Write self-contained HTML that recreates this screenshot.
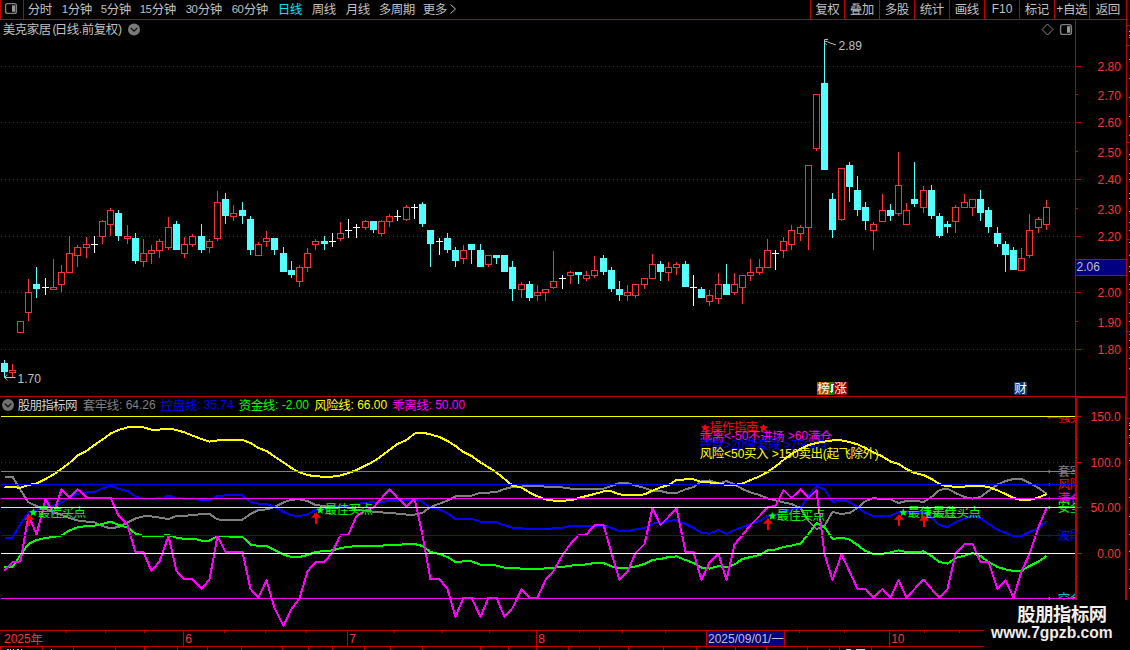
<!DOCTYPE html>
<html><head><meta charset="utf-8"><title>chart</title>
<style>html,body{margin:0;padding:0;background:#000;overflow:hidden}svg{display:block}text{font-family:"Liberation Sans","Noto Sans CJK SC",sans-serif;}</style>
</head><body>
<svg width="1130" height="650" viewBox="0 0 1130 650" shape-rendering="crispEdges">
<rect width="1130" height="650" fill="#000"/>
<g shape-rendering="geometricPrecision"><rect x="5.6" y="3.6" width="10.8" height="9.8" rx="2" fill="none" stroke="#808080" stroke-width="1.4"/><rect x="12" y="5.4" width="3.2" height="6.4" fill="#989898"/></g>
<rect x="0" y="0" width="1" height="19" fill="#c00000"/>
<rect x="23" y="0" width="1" height="19" fill="#c00000"/>
<rect x="0" y="19" width="1127" height="1" fill="#c00000"/>
<g shape-rendering="geometricPrecision" font-size="12.5" fill="#c0c0c0" letter-spacing="-0.5">
<text x="27.7" y="13.9">分时</text>
<text y="13.9"><tspan x="61.7" y="13.3" font-size="11.4">1</tspan><tspan x="67.7" y="13.9">分钟</tspan></text>
<text y="13.9"><tspan x="100.7" y="13.3" font-size="11.4">5</tspan><tspan x="106.7" y="13.9">分钟</tspan></text>
<text y="13.9"><tspan x="139.7" y="13.3" font-size="11.4">15</tspan><tspan x="151.7" y="13.9">分钟</tspan></text>
<text y="13.9"><tspan x="185.7" y="13.3" font-size="11.4">30</tspan><tspan x="197.7" y="13.9">分钟</tspan></text>
<text y="13.9"><tspan x="231.7" y="13.3" font-size="11.4">60</tspan><tspan x="243.7" y="13.9">分钟</tspan></text>
<text x="277.7" y="13.9" fill="#00e8ff">日线</text>
<text x="311.7" y="13.9">周线</text>
<text x="345.7" y="13.9">月线</text>
<text x="378.7" y="13.9">多周期</text>
<text x="422.7" y="13.9">更多</text>
</g>
<path d="M450.5 4.5 L455.5 9 L450.5 13.5" fill="none" stroke="#c0c0c0" stroke-width="1" shape-rendering="geometricPrecision"/>
<rect x="810" y="0" width="1" height="19" fill="#c00000"/>
<rect x="844" y="0" width="1" height="19" fill="#c00000"/>
<rect x="879" y="0" width="1" height="19" fill="#c00000"/>
<rect x="914" y="0" width="1" height="19" fill="#c00000"/>
<rect x="949" y="0" width="1" height="19" fill="#c00000"/>
<rect x="984" y="0" width="1" height="19" fill="#c00000"/>
<rect x="1019" y="0" width="1" height="19" fill="#c00000"/>
<rect x="1054" y="0" width="1" height="19" fill="#c00000"/>
<rect x="1089" y="0" width="1" height="19" fill="#c00000"/>
<rect x="1126" y="0" width="1" height="19" fill="#c00000"/>
<g shape-rendering="geometricPrecision" font-size="12.5" fill="#c0c0c0" letter-spacing="-0.5">
<text x="815.2" y="13.9">复权</text>
<text x="849.7" y="13.9">叠加</text>
<text x="884.7" y="13.9">多股</text>
<text x="919.7" y="13.9">统计</text>
<text x="954.7" y="13.9">画线</text>
<text x="991.7" y="13.1" font-size="12" letter-spacing="0">F10</text>
<text x="1024.7" y="13.9">标记</text>
<text x="1056.2" y="13.3" font-size="12" letter-spacing="0">+</text>
<text x="1063" y="13.9">自选</text>
<text x="1095.7" y="13.9">返回</text>
</g>
<g shape-rendering="geometricPrecision" font-size="12.5" fill="#c0c0c0" letter-spacing="-0.5">
<text x="2.7" y="33.9">美克家居</text>
<text y="33.9"><tspan x="52.6" y="33.3" font-size="12">(</tspan><tspan x="54.7" y="33.9">日线</tspan><tspan x="78.7" y="33.3" font-size="12">.</tspan><tspan x="81.7" y="33.9">前复权</tspan><tspan x="118" y="33.3" font-size="12">)</tspan></text>
</g>
<g shape-rendering="geometricPrecision"><circle cx="134" cy="29.5" r="6" fill="#7a7a7a"/><path d="M130.8 28 L134 31.2 L137.2 28" fill="none" stroke="#101010" stroke-width="1.3"/></g>
<g shape-rendering="geometricPrecision"><path d="M1047.5 24 L1053 29.5 L1047.5 35 L1042 29.5 Z" fill="none" stroke="#8a8a8a" stroke-width="1"/><rect x="1060.6" y="24.6" width="10.8" height="9.8" rx="2" fill="none" stroke="#808080" stroke-width="1.4"/><rect x="1067" y="26.2" width="3.2" height="6.5" fill="#989898"/></g>
<rect x="1075" y="19" width="1" height="377" fill="#c00000"/>
<rect x="1126" y="0" width="1" height="396" fill="#c00000"/>
<rect x="0" y="396" width="1127" height="1" fill="#c00000"/>
<line x1="1" y1="66.5" x2="1075" y2="66.5" stroke="#b80000" stroke-width="1" stroke-dasharray="1 3"/>
<rect x="1076" y="66" width="5" height="1" fill="#c00000"/>
<text x="1097.6" y="70.9" font-size="12" fill="#ff3232" shape-rendering="geometricPrecision">2.80</text>
<rect x="1076" y="94" width="2" height="1" fill="#c00000"/>
<text x="1097.6" y="99.6" font-size="12" fill="#ff3232" shape-rendering="geometricPrecision">2.70</text>
<line x1="1" y1="122.5" x2="1075" y2="122.5" stroke="#b80000" stroke-width="1" stroke-dasharray="1 3"/>
<rect x="1076" y="122" width="5" height="1" fill="#c00000"/>
<text x="1097.6" y="126.9" font-size="12" fill="#ff3232" shape-rendering="geometricPrecision">2.60</text>
<rect x="1076" y="151" width="2" height="1" fill="#c00000"/>
<text x="1097.6" y="156.6" font-size="12" fill="#ff3232" shape-rendering="geometricPrecision">2.50</text>
<line x1="1" y1="179.5" x2="1075" y2="179.5" stroke="#b80000" stroke-width="1" stroke-dasharray="1 3"/>
<rect x="1076" y="179" width="5" height="1" fill="#c00000"/>
<text x="1097.6" y="183.9" font-size="12" fill="#ff3232" shape-rendering="geometricPrecision">2.40</text>
<rect x="1076" y="208" width="2" height="1" fill="#c00000"/>
<text x="1097.6" y="213.6" font-size="12" fill="#ff3232" shape-rendering="geometricPrecision">2.30</text>
<line x1="1" y1="236.5" x2="1075" y2="236.5" stroke="#b80000" stroke-width="1" stroke-dasharray="1 3"/>
<rect x="1076" y="236" width="5" height="1" fill="#c00000"/>
<text x="1097.6" y="240.9" font-size="12" fill="#ff3232" shape-rendering="geometricPrecision">2.20</text>
<line x1="1" y1="292.5" x2="1075" y2="292.5" stroke="#b80000" stroke-width="1" stroke-dasharray="1 3"/>
<rect x="1076" y="292" width="5" height="1" fill="#c00000"/>
<text x="1097.6" y="296.9" font-size="12" fill="#ff3232" shape-rendering="geometricPrecision">2.00</text>
<rect x="1076" y="321" width="2" height="1" fill="#c00000"/>
<text x="1097.6" y="326.6" font-size="12" fill="#ff3232" shape-rendering="geometricPrecision">1.90</text>
<line x1="1" y1="349.5" x2="1075" y2="349.5" stroke="#b80000" stroke-width="1" stroke-dasharray="1 3"/>
<rect x="1076" y="349" width="5" height="1" fill="#c00000"/>
<text x="1097.6" y="353.9" font-size="12" fill="#ff3232" shape-rendering="geometricPrecision">1.80</text>
<rect x="1076" y="264" width="2" height="1" fill="#c00000"/>
<rect x="1076" y="259" width="50" height="17" fill="#000080"/>
<rect x="1076" y="259" width="50" height="1" fill="#c00000"/>
<rect x="1076" y="275" width="50" height="1" fill="#c00000"/>
<text x="1076.6" y="271.2" font-size="12" fill="#c0c0c0" shape-rendering="geometricPrecision">2.06</text>
<g shape-rendering="crispEdges">
<rect x="4" y="360" width="1" height="17" fill="#54ffff"/>
<rect x="1" y="363" width="7" height="9" fill="#54ffff"/>
<rect x="12" y="364" width="1" height="6" fill="#ff3232"/>
<rect x="12" y="373" width="1" height="4" fill="#ff3232"/>
<rect x="9.5" y="370.5" width="6" height="2" fill="none" stroke="#ff3232" stroke-width="1"/>
<rect x="17.5" y="321.5" width="6" height="11" fill="none" stroke="#ff3232" stroke-width="1"/>
<rect x="28" y="279" width="1" height="13" fill="#ff3232"/>
<rect x="28" y="313" width="1" height="8" fill="#ff3232"/>
<rect x="25.5" y="292.5" width="6" height="20" fill="none" stroke="#ff3232" stroke-width="1"/>
<rect x="36" y="267" width="1" height="31" fill="#54ffff"/>
<rect x="33" y="284" width="7" height="5" fill="#54ffff"/>
<rect x="45" y="278" width="1" height="17" fill="#ffffff"/>
<rect x="42" y="287" width="7" height="1" fill="#ffffff"/>
<rect x="53" y="259" width="1" height="28" fill="#ff3232"/>
<rect x="50.5" y="287.5" width="6" height="2" fill="none" stroke="#ff3232" stroke-width="1"/>
<rect x="61" y="265" width="1" height="7" fill="#ff3232"/>
<rect x="61" y="285" width="1" height="7" fill="#ff3232"/>
<rect x="58.5" y="272.5" width="6" height="12" fill="none" stroke="#ff3232" stroke-width="1"/>
<rect x="69" y="236" width="1" height="17" fill="#ff3232"/>
<rect x="66.5" y="253.5" width="6" height="19" fill="none" stroke="#ff3232" stroke-width="1"/>
<rect x="77" y="245" width="1" height="2" fill="#ff3232"/>
<rect x="77" y="256" width="1" height="11" fill="#ff3232"/>
<rect x="74.5" y="247.5" width="6" height="8" fill="none" stroke="#ff3232" stroke-width="1"/>
<rect x="86" y="237" width="1" height="7" fill="#ff3232"/>
<rect x="86" y="248" width="1" height="10" fill="#ff3232"/>
<rect x="83.5" y="244.5" width="6" height="3" fill="none" stroke="#ff3232" stroke-width="1"/>
<rect x="94" y="236" width="1" height="17" fill="#ffffff"/>
<rect x="91" y="244" width="7" height="1" fill="#ffffff"/>
<rect x="102" y="220" width="1" height="1" fill="#ff3232"/>
<rect x="102" y="237" width="1" height="7" fill="#ff3232"/>
<rect x="99.5" y="221.5" width="6" height="15" fill="none" stroke="#ff3232" stroke-width="1"/>
<rect x="110" y="208" width="1" height="2" fill="#ff3232"/>
<rect x="110" y="225" width="1" height="11" fill="#ff3232"/>
<rect x="107.5" y="210.5" width="6" height="14" fill="none" stroke="#ff3232" stroke-width="1"/>
<rect x="118" y="210" width="1" height="31" fill="#54ffff"/>
<rect x="115" y="213" width="7" height="23" fill="#54ffff"/>
<rect x="127" y="225" width="1" height="11" fill="#ff3232"/>
<rect x="127" y="239" width="1" height="5" fill="#ff3232"/>
<rect x="124.5" y="236.5" width="6" height="2" fill="none" stroke="#ff3232" stroke-width="1"/>
<rect x="135" y="233" width="1" height="31" fill="#54ffff"/>
<rect x="132" y="238" width="7" height="23" fill="#54ffff"/>
<rect x="143" y="239" width="1" height="14" fill="#ff3232"/>
<rect x="143" y="262" width="1" height="5" fill="#ff3232"/>
<rect x="140.5" y="253.5" width="6" height="8" fill="none" stroke="#ff3232" stroke-width="1"/>
<rect x="151" y="245" width="1" height="5" fill="#ff3232"/>
<rect x="151" y="254" width="1" height="10" fill="#ff3232"/>
<rect x="148.5" y="250.5" width="6" height="3" fill="none" stroke="#ff3232" stroke-width="1"/>
<rect x="159" y="239" width="1" height="2" fill="#ff3232"/>
<rect x="159" y="251" width="1" height="7" fill="#ff3232"/>
<rect x="156.5" y="241.5" width="6" height="9" fill="none" stroke="#ff3232" stroke-width="1"/>
<rect x="168" y="217" width="1" height="10" fill="#ff3232"/>
<rect x="168" y="248" width="1" height="2" fill="#ff3232"/>
<rect x="165.5" y="227.5" width="6" height="20" fill="none" stroke="#ff3232" stroke-width="1"/>
<rect x="176" y="221" width="1" height="29" fill="#54ffff"/>
<rect x="173" y="224" width="7" height="26" fill="#54ffff"/>
<rect x="184" y="237" width="1" height="7" fill="#ff3232"/>
<rect x="184" y="254" width="1" height="4" fill="#ff3232"/>
<rect x="181.5" y="244.5" width="6" height="9" fill="none" stroke="#ff3232" stroke-width="1"/>
<rect x="192" y="234" width="1" height="2" fill="#ff3232"/>
<rect x="192" y="245" width="1" height="2" fill="#ff3232"/>
<rect x="189.5" y="236.5" width="6" height="8" fill="none" stroke="#ff3232" stroke-width="1"/>
<rect x="201" y="224" width="1" height="29" fill="#54ffff"/>
<rect x="198" y="236" width="7" height="14" fill="#54ffff"/>
<rect x="209" y="239" width="1" height="2" fill="#ff3232"/>
<rect x="209" y="248" width="1" height="5" fill="#ff3232"/>
<rect x="206.5" y="241.5" width="6" height="6" fill="none" stroke="#ff3232" stroke-width="1"/>
<rect x="217" y="191" width="1" height="11" fill="#ff3232"/>
<rect x="217" y="239" width="1" height="2" fill="#ff3232"/>
<rect x="214.5" y="202.5" width="6" height="36" fill="none" stroke="#ff3232" stroke-width="1"/>
<rect x="225" y="193" width="1" height="31" fill="#54ffff"/>
<rect x="222" y="199" width="7" height="17" fill="#54ffff"/>
<rect x="233" y="205" width="1" height="8" fill="#ff3232"/>
<rect x="233" y="217" width="1" height="4" fill="#ff3232"/>
<rect x="230.5" y="213.5" width="6" height="3" fill="none" stroke="#ff3232" stroke-width="1"/>
<rect x="242" y="202" width="1" height="22" fill="#54ffff"/>
<rect x="239" y="210" width="7" height="6" fill="#54ffff"/>
<rect x="250" y="216" width="1" height="39" fill="#54ffff"/>
<rect x="247" y="219" width="7" height="31" fill="#54ffff"/>
<rect x="258" y="242" width="1" height="2" fill="#ff3232"/>
<rect x="255.5" y="244.5" width="6" height="11" fill="none" stroke="#ff3232" stroke-width="1"/>
<rect x="266" y="231" width="1" height="7" fill="#ff3232"/>
<rect x="266" y="242" width="1" height="5" fill="#ff3232"/>
<rect x="263.5" y="238.5" width="6" height="3" fill="none" stroke="#ff3232" stroke-width="1"/>
<rect x="274" y="238" width="1" height="17" fill="#54ffff"/>
<rect x="271" y="238" width="7" height="12" fill="#54ffff"/>
<rect x="283" y="247" width="1" height="25" fill="#54ffff"/>
<rect x="280" y="253" width="7" height="19" fill="#54ffff"/>
<rect x="291" y="261" width="1" height="17" fill="#54ffff"/>
<rect x="288" y="270" width="7" height="5" fill="#54ffff"/>
<rect x="299" y="265" width="1" height="2" fill="#ff3232"/>
<rect x="299" y="282" width="1" height="5" fill="#ff3232"/>
<rect x="296.5" y="267.5" width="6" height="14" fill="none" stroke="#ff3232" stroke-width="1"/>
<rect x="307" y="248" width="1" height="5" fill="#ff3232"/>
<rect x="307" y="268" width="1" height="4" fill="#ff3232"/>
<rect x="304.5" y="253.5" width="6" height="14" fill="none" stroke="#ff3232" stroke-width="1"/>
<rect x="315" y="239" width="1" height="2" fill="#ff3232"/>
<rect x="315" y="245" width="1" height="5" fill="#ff3232"/>
<rect x="312.5" y="241.5" width="6" height="3" fill="none" stroke="#ff3232" stroke-width="1"/>
<rect x="324" y="236" width="1" height="14" fill="#54ffff"/>
<rect x="321" y="241" width="7" height="3" fill="#54ffff"/>
<rect x="332" y="233" width="1" height="14" fill="#ffffff"/>
<rect x="329" y="241" width="7" height="1" fill="#ffffff"/>
<rect x="340" y="222" width="1" height="11" fill="#ff3232"/>
<rect x="340" y="239" width="1" height="2" fill="#ff3232"/>
<rect x="337.5" y="233.5" width="6" height="5" fill="none" stroke="#ff3232" stroke-width="1"/>
<rect x="348" y="219" width="1" height="19" fill="#ffffff"/>
<rect x="345" y="230" width="7" height="1" fill="#ffffff"/>
<rect x="356" y="224" width="1" height="14" fill="#ffffff"/>
<rect x="353" y="227" width="7" height="1" fill="#ffffff"/>
<rect x="365" y="220" width="1" height="1" fill="#ff3232"/>
<rect x="365" y="228" width="1" height="2" fill="#ff3232"/>
<rect x="362.5" y="221.5" width="6" height="6" fill="none" stroke="#ff3232" stroke-width="1"/>
<rect x="373" y="221" width="1" height="12" fill="#54ffff"/>
<rect x="370" y="221" width="7" height="9" fill="#54ffff"/>
<rect x="381" y="220" width="1" height="1" fill="#ff3232"/>
<rect x="381" y="234" width="1" height="2" fill="#ff3232"/>
<rect x="378.5" y="221.5" width="6" height="12" fill="none" stroke="#ff3232" stroke-width="1"/>
<rect x="389" y="214" width="1" height="2" fill="#ff3232"/>
<rect x="389" y="222" width="1" height="5" fill="#ff3232"/>
<rect x="386.5" y="216.5" width="6" height="5" fill="none" stroke="#ff3232" stroke-width="1"/>
<rect x="397" y="210" width="1" height="11" fill="#ffffff"/>
<rect x="394" y="216" width="7" height="1" fill="#ffffff"/>
<rect x="406" y="205" width="1" height="2" fill="#ff3232"/>
<rect x="406" y="220" width="1" height="1" fill="#ff3232"/>
<rect x="403.5" y="207.5" width="6" height="12" fill="none" stroke="#ff3232" stroke-width="1"/>
<rect x="414" y="204" width="1" height="15" fill="#ffffff"/>
<rect x="411" y="207" width="7" height="1" fill="#ffffff"/>
<rect x="422" y="202" width="1" height="25" fill="#54ffff"/>
<rect x="419" y="204" width="7" height="20" fill="#54ffff"/>
<rect x="430" y="230" width="1" height="37" fill="#54ffff"/>
<rect x="427" y="230" width="7" height="14" fill="#54ffff"/>
<rect x="439" y="238" width="1" height="17" fill="#ffffff"/>
<rect x="436" y="241" width="7" height="1" fill="#ffffff"/>
<rect x="447" y="233" width="1" height="20" fill="#54ffff"/>
<rect x="444" y="238" width="7" height="12" fill="#54ffff"/>
<rect x="455" y="247" width="1" height="20" fill="#54ffff"/>
<rect x="452" y="250" width="7" height="11" fill="#54ffff"/>
<rect x="463" y="245" width="1" height="5" fill="#ff3232"/>
<rect x="463" y="259" width="1" height="5" fill="#ff3232"/>
<rect x="460.5" y="250.5" width="6" height="8" fill="none" stroke="#ff3232" stroke-width="1"/>
<rect x="471" y="244" width="1" height="20" fill="#54ffff"/>
<rect x="468" y="244" width="7" height="6" fill="#54ffff"/>
<rect x="480" y="244" width="1" height="23" fill="#54ffff"/>
<rect x="477" y="250" width="7" height="17" fill="#54ffff"/>
<rect x="488" y="265" width="1" height="2" fill="#ff3232"/>
<rect x="485.5" y="255.5" width="6" height="9" fill="none" stroke="#ff3232" stroke-width="1"/>
<rect x="496" y="255" width="1" height="9" fill="#54ffff"/>
<rect x="493" y="255" width="7" height="3" fill="#54ffff"/>
<rect x="504" y="255" width="1" height="17" fill="#54ffff"/>
<rect x="501" y="255" width="7" height="17" fill="#54ffff"/>
<rect x="512" y="261" width="1" height="40" fill="#54ffff"/>
<rect x="509" y="267" width="7" height="22" fill="#54ffff"/>
<rect x="521" y="282" width="1" height="2" fill="#ff3232"/>
<rect x="521" y="290" width="1" height="8" fill="#ff3232"/>
<rect x="518.5" y="284.5" width="6" height="5" fill="none" stroke="#ff3232" stroke-width="1"/>
<rect x="529" y="281" width="1" height="20" fill="#54ffff"/>
<rect x="526" y="284" width="7" height="14" fill="#54ffff"/>
<rect x="537" y="285" width="1" height="7" fill="#ff3232"/>
<rect x="537" y="296" width="1" height="5" fill="#ff3232"/>
<rect x="534.5" y="292.5" width="6" height="3" fill="none" stroke="#ff3232" stroke-width="1"/>
<rect x="545" y="293" width="1" height="8" fill="#ff3232"/>
<rect x="542.5" y="289.5" width="6" height="3" fill="none" stroke="#ff3232" stroke-width="1"/>
<rect x="553" y="251" width="1" height="30" fill="#ff3232"/>
<rect x="553" y="288" width="1" height="1" fill="#ff3232"/>
<rect x="550.5" y="281.5" width="6" height="6" fill="none" stroke="#ff3232" stroke-width="1"/>
<rect x="562" y="275" width="1" height="14" fill="#ffffff"/>
<rect x="559" y="278" width="7" height="1" fill="#ffffff"/>
<rect x="570" y="271" width="1" height="1" fill="#ff3232"/>
<rect x="570" y="276" width="1" height="8" fill="#ff3232"/>
<rect x="567.5" y="272.5" width="6" height="3" fill="none" stroke="#ff3232" stroke-width="1"/>
<rect x="578" y="272" width="1" height="12" fill="#54ffff"/>
<rect x="575" y="272" width="7" height="3" fill="#54ffff"/>
<rect x="586" y="271" width="1" height="4" fill="#ff3232"/>
<rect x="586" y="279" width="1" height="2" fill="#ff3232"/>
<rect x="583.5" y="275.5" width="6" height="3" fill="none" stroke="#ff3232" stroke-width="1"/>
<rect x="594" y="256" width="1" height="14" fill="#ff3232"/>
<rect x="594" y="276" width="1" height="2" fill="#ff3232"/>
<rect x="591.5" y="270.5" width="6" height="5" fill="none" stroke="#ff3232" stroke-width="1"/>
<rect x="603" y="255" width="1" height="20" fill="#54ffff"/>
<rect x="600" y="258" width="7" height="14" fill="#54ffff"/>
<rect x="611" y="267" width="1" height="25" fill="#54ffff"/>
<rect x="608" y="270" width="7" height="19" fill="#54ffff"/>
<rect x="619" y="281" width="1" height="20" fill="#54ffff"/>
<rect x="616" y="289" width="7" height="6" fill="#54ffff"/>
<rect x="627" y="285" width="1" height="7" fill="#ff3232"/>
<rect x="627" y="296" width="1" height="5" fill="#ff3232"/>
<rect x="624.5" y="292.5" width="6" height="3" fill="none" stroke="#ff3232" stroke-width="1"/>
<rect x="635" y="296" width="1" height="2" fill="#ff3232"/>
<rect x="632.5" y="284.5" width="6" height="11" fill="none" stroke="#ff3232" stroke-width="1"/>
<rect x="644" y="285" width="1" height="4" fill="#ff3232"/>
<rect x="641.5" y="278.5" width="6" height="6" fill="none" stroke="#ff3232" stroke-width="1"/>
<rect x="652" y="254" width="1" height="10" fill="#ff3232"/>
<rect x="649.5" y="264.5" width="6" height="14" fill="none" stroke="#ff3232" stroke-width="1"/>
<rect x="660" y="261" width="1" height="20" fill="#54ffff"/>
<rect x="657" y="264" width="7" height="8" fill="#54ffff"/>
<rect x="668" y="262" width="1" height="5" fill="#ff3232"/>
<rect x="668" y="273" width="1" height="8" fill="#ff3232"/>
<rect x="665.5" y="267.5" width="6" height="5" fill="none" stroke="#ff3232" stroke-width="1"/>
<rect x="676" y="262" width="1" height="2" fill="#ff3232"/>
<rect x="676" y="268" width="1" height="7" fill="#ff3232"/>
<rect x="673.5" y="264.5" width="6" height="3" fill="none" stroke="#ff3232" stroke-width="1"/>
<rect x="685" y="261" width="1" height="26" fill="#54ffff"/>
<rect x="682" y="264" width="7" height="23" fill="#54ffff"/>
<rect x="693" y="275" width="1" height="31" fill="#ffffff"/>
<rect x="690" y="287" width="7" height="1" fill="#ffffff"/>
<rect x="701" y="287" width="1" height="11" fill="#54ffff"/>
<rect x="698" y="289" width="7" height="9" fill="#54ffff"/>
<rect x="709" y="290" width="1" height="5" fill="#ff3232"/>
<rect x="709" y="302" width="1" height="4" fill="#ff3232"/>
<rect x="706.5" y="295.5" width="6" height="6" fill="none" stroke="#ff3232" stroke-width="1"/>
<rect x="718" y="273" width="1" height="11" fill="#ff3232"/>
<rect x="718" y="299" width="1" height="5" fill="#ff3232"/>
<rect x="715.5" y="284.5" width="6" height="14" fill="none" stroke="#ff3232" stroke-width="1"/>
<rect x="726" y="264" width="1" height="31" fill="#54ffff"/>
<rect x="723" y="284" width="7" height="11" fill="#54ffff"/>
<rect x="734" y="273" width="1" height="11" fill="#ff3232"/>
<rect x="734" y="293" width="1" height="2" fill="#ff3232"/>
<rect x="731.5" y="284.5" width="6" height="8" fill="none" stroke="#ff3232" stroke-width="1"/>
<rect x="742" y="288" width="1" height="16" fill="#ff3232"/>
<rect x="739.5" y="275.5" width="6" height="12" fill="none" stroke="#ff3232" stroke-width="1"/>
<rect x="750" y="259" width="1" height="13" fill="#ff3232"/>
<rect x="750" y="276" width="1" height="5" fill="#ff3232"/>
<rect x="747.5" y="272.5" width="6" height="3" fill="none" stroke="#ff3232" stroke-width="1"/>
<rect x="759" y="259" width="1" height="8" fill="#ff3232"/>
<rect x="759" y="273" width="1" height="2" fill="#ff3232"/>
<rect x="756.5" y="267.5" width="6" height="5" fill="none" stroke="#ff3232" stroke-width="1"/>
<rect x="767" y="239" width="1" height="11" fill="#ff3232"/>
<rect x="764.5" y="250.5" width="6" height="17" fill="none" stroke="#ff3232" stroke-width="1"/>
<rect x="775" y="250" width="1" height="20" fill="#ffffff"/>
<rect x="772" y="253" width="7" height="1" fill="#ffffff"/>
<rect x="783" y="237" width="1" height="4" fill="#ff3232"/>
<rect x="783" y="251" width="1" height="7" fill="#ff3232"/>
<rect x="780.5" y="241.5" width="6" height="9" fill="none" stroke="#ff3232" stroke-width="1"/>
<rect x="791" y="225" width="1" height="5" fill="#ff3232"/>
<rect x="791" y="245" width="1" height="5" fill="#ff3232"/>
<rect x="788.5" y="230.5" width="6" height="14" fill="none" stroke="#ff3232" stroke-width="1"/>
<rect x="800" y="225" width="1" height="2" fill="#ff3232"/>
<rect x="800" y="234" width="1" height="7" fill="#ff3232"/>
<rect x="797.5" y="227.5" width="6" height="6" fill="none" stroke="#ff3232" stroke-width="1"/>
<rect x="808" y="228" width="1" height="22" fill="#ff3232"/>
<rect x="805.5" y="165.5" width="6" height="62" fill="none" stroke="#ff3232" stroke-width="1"/>
<rect x="816" y="149" width="1" height="2" fill="#ff3232"/>
<rect x="813.5" y="94.5" width="6" height="54" fill="none" stroke="#ff3232" stroke-width="1"/>
<rect x="824" y="43" width="1" height="127" fill="#54ffff"/>
<rect x="821" y="83" width="7" height="87" fill="#54ffff"/>
<rect x="832" y="193" width="1" height="45" fill="#54ffff"/>
<rect x="829" y="199" width="7" height="31" fill="#54ffff"/>
<rect x="841" y="220" width="1" height="1" fill="#ff3232"/>
<rect x="838.5" y="168.5" width="6" height="51" fill="none" stroke="#ff3232" stroke-width="1"/>
<rect x="849" y="162" width="1" height="40" fill="#54ffff"/>
<rect x="846" y="165" width="7" height="22" fill="#54ffff"/>
<rect x="857" y="176" width="1" height="40" fill="#54ffff"/>
<rect x="854" y="190" width="7" height="20" fill="#54ffff"/>
<rect x="865" y="202" width="1" height="28" fill="#54ffff"/>
<rect x="862" y="207" width="7" height="14" fill="#54ffff"/>
<rect x="873" y="222" width="1" height="2" fill="#ff3232"/>
<rect x="873" y="231" width="1" height="19" fill="#ff3232"/>
<rect x="870.5" y="224.5" width="6" height="6" fill="none" stroke="#ff3232" stroke-width="1"/>
<rect x="882" y="194" width="1" height="16" fill="#ff3232"/>
<rect x="879.5" y="210.5" width="6" height="11" fill="none" stroke="#ff3232" stroke-width="1"/>
<rect x="890" y="204" width="1" height="17" fill="#54ffff"/>
<rect x="887" y="210" width="7" height="6" fill="#54ffff"/>
<rect x="898" y="152" width="1" height="33" fill="#ff3232"/>
<rect x="898" y="214" width="1" height="2" fill="#ff3232"/>
<rect x="895.5" y="185.5" width="6" height="28" fill="none" stroke="#ff3232" stroke-width="1"/>
<rect x="906" y="203" width="1" height="7" fill="#ff3232"/>
<rect x="903.5" y="210.5" width="6" height="14" fill="none" stroke="#ff3232" stroke-width="1"/>
<rect x="914" y="162" width="1" height="45" fill="#54ffff"/>
<rect x="911" y="199" width="7" height="5" fill="#54ffff"/>
<rect x="923" y="186" width="1" height="4" fill="#ff3232"/>
<rect x="923" y="208" width="1" height="5" fill="#ff3232"/>
<rect x="920.5" y="190.5" width="6" height="17" fill="none" stroke="#ff3232" stroke-width="1"/>
<rect x="931" y="185" width="1" height="34" fill="#54ffff"/>
<rect x="928" y="190" width="7" height="26" fill="#54ffff"/>
<rect x="939" y="213" width="1" height="25" fill="#54ffff"/>
<rect x="936" y="216" width="7" height="20" fill="#54ffff"/>
<rect x="947" y="221" width="1" height="12" fill="#54ffff"/>
<rect x="944" y="224" width="7" height="3" fill="#54ffff"/>
<rect x="955" y="205" width="1" height="2" fill="#ff3232"/>
<rect x="955" y="222" width="1" height="11" fill="#ff3232"/>
<rect x="952.5" y="207.5" width="6" height="14" fill="none" stroke="#ff3232" stroke-width="1"/>
<rect x="964" y="194" width="1" height="8" fill="#ff3232"/>
<rect x="961.5" y="202.5" width="6" height="5" fill="none" stroke="#ff3232" stroke-width="1"/>
<rect x="972" y="208" width="1" height="8" fill="#ff3232"/>
<rect x="969.5" y="199.5" width="6" height="8" fill="none" stroke="#ff3232" stroke-width="1"/>
<rect x="980" y="190" width="1" height="31" fill="#54ffff"/>
<rect x="977" y="199" width="7" height="14" fill="#54ffff"/>
<rect x="988" y="207" width="1" height="26" fill="#54ffff"/>
<rect x="985" y="210" width="7" height="17" fill="#54ffff"/>
<rect x="997" y="227" width="1" height="20" fill="#54ffff"/>
<rect x="994" y="233" width="7" height="11" fill="#54ffff"/>
<rect x="1005" y="241" width="1" height="31" fill="#54ffff"/>
<rect x="1002" y="244" width="7" height="11" fill="#54ffff"/>
<rect x="1013" y="247" width="1" height="23" fill="#54ffff"/>
<rect x="1010" y="250" width="7" height="20" fill="#54ffff"/>
<rect x="1021" y="248" width="1" height="10" fill="#ff3232"/>
<rect x="1018.5" y="258.5" width="6" height="12" fill="none" stroke="#ff3232" stroke-width="1"/>
<rect x="1029" y="214" width="1" height="16" fill="#ff3232"/>
<rect x="1029" y="256" width="1" height="2" fill="#ff3232"/>
<rect x="1026.5" y="230.5" width="6" height="25" fill="none" stroke="#ff3232" stroke-width="1"/>
<rect x="1038" y="217" width="1" height="2" fill="#ff3232"/>
<rect x="1038" y="228" width="1" height="5" fill="#ff3232"/>
<rect x="1035.5" y="219.5" width="6" height="8" fill="none" stroke="#ff3232" stroke-width="1"/>
<rect x="1046" y="200" width="1" height="7" fill="#ff3232"/>
<rect x="1046" y="225" width="1" height="5" fill="#ff3232"/>
<rect x="1043.5" y="207.5" width="6" height="17" fill="none" stroke="#ff3232" stroke-width="1"/>
</g>
<path d="M824.5 43 L824.5 39.6 M824.5 39.6 L828 39.4 M825 41.4 L827.6 41.4 M827.5 41.8 L831 43.3 L836 44.9 M825.2 43.2 L826.6 45" fill="none" stroke="#c0c0c0" stroke-width="1" shape-rendering="geometricPrecision"/>
<text x="838.6" y="49.8" font-size="12" fill="#c0c0c0" shape-rendering="geometricPrecision">2.89</text>
<path d="M4.5 377.5 L15.5 377.5 M4.5 377.5 L7.5 374.8 M4.5 377.5 L7.5 380.2" fill="none" stroke="#c0c0c0" stroke-width="1" shape-rendering="geometricPrecision"/>
<text x="17.6" y="382.9" font-size="12" fill="#c0c0c0" shape-rendering="geometricPrecision">1.70</text>
<rect x="826" y="382" width="13" height="13" fill="#008c00"/>
<rect x="831" y="384" width="1.6" height="7" fill="#ffffff"/>
<rect x="831" y="384" width="3" height="1.2" fill="#ffffff"/>
<path d="M829.8 390.5 L833.8 390.5 L831.8 393.5Z" fill="#fff"/>
<rect x="817" y="382" width="13" height="13" fill="#a05000"/>
<text x="817.2" y="393" font-size="12.5" fill="#ffffff" shape-rendering="geometricPrecision">榜</text>
<rect x="834" y="382" width="13" height="13" fill="#8c0000"/>
<text x="834.2" y="393" font-size="12.5" fill="#ffffff" shape-rendering="geometricPrecision">涨</text>
<rect x="1014" y="382" width="13" height="13" fill="#003870"/>
<text x="1014.2" y="393" font-size="12.5" fill="#ffffff" shape-rendering="geometricPrecision">财</text>
<g shape-rendering="geometricPrecision"><circle cx="8" cy="405" r="6" fill="#707070"/><path d="M4.8 403.6 L8 406.8 L11.2 403.6" fill="none" stroke="#101010" stroke-width="1.3"/></g>
<g shape-rendering="geometricPrecision" font-size="12.5" letter-spacing="-0.5">
<text x="17.7" y="409.6" fill="#d0d0d0" letter-spacing="-0.7">股朋指标网</text>
<text x="82.7" y="409.6" fill="#808080">套牢线</text>
<text x="119" y="408.8" font-size="12" letter-spacing="0" fill="#808080">: 64.26</text>
<text x="160.7" y="409.6" fill="#0000ff">控盘线</text>
<text x="197" y="408.8" font-size="12" letter-spacing="0" fill="#0000ff">: 35.74</text>
<text x="238.7" y="409.6" fill="#00ff00">资金线</text>
<text x="275" y="408.8" font-size="12" letter-spacing="0" fill="#00ff00">: -2.00</text>
<text x="314.2" y="409.6" fill="#ffff00">风险线</text>
<text x="350.5" y="408.8" font-size="12" letter-spacing="0" fill="#ffff00">: 66.00</text>
<text x="392.2" y="409.6" fill="#ff00ff">乖离线</text>
<text x="428.5" y="408.8" font-size="12" letter-spacing="0" fill="#ff00ff">: 50.00</text>
</g>
<clipPath id="cp"><rect x="0" y="416" width="1075" height="214"/></clipPath>
<clipPath id="cp2"><rect x="0" y="417" width="1075" height="183"/></clipPath>
<polygon points="705.20,423.40 706.44,426.29 709.57,426.58 707.21,428.65 707.90,431.72 705.20,430.12 702.50,431.72 703.19,428.65 700.83,426.58 703.96,426.29" fill="#ff0000" shape-rendering="geometricPrecision"/>
<text x="709.7" y="431.9" font-size="12.5" letter-spacing="-0.5" fill="#ff0000" shape-rendering="geometricPrecision">操作指南</text>
<polygon points="763.40,423.40 764.64,426.29 767.77,426.58 765.41,428.65 766.10,431.72 763.40,430.12 760.70,431.72 761.39,428.65 759.03,426.58 762.16,426.29" fill="#ff0000" shape-rendering="geometricPrecision"/>
<text font-size="12.5" letter-spacing="-0.5" fill="#ff00ff" shape-rendering="geometricPrecision"><tspan x="699.7" y="440.6">乖离</tspan><tspan x="724" y="439.8" font-size="12" letter-spacing="0">&lt;-50</tspan><tspan x="748.1" y="440.6">不进场</tspan><tspan x="787.7" y="439.8" font-size="12" letter-spacing="0">&gt;60</tspan><tspan x="807.8" y="440.6">满仓</tspan></text>
<text font-size="12.5" letter-spacing="-0.5" fill="#0000ff" shape-rendering="geometricPrecision"><tspan x="699.7" y="449.4">控盘</tspan><tspan x="724" y="448.6" font-size="12" letter-spacing="0">&gt;20</tspan><tspan x="744.1" y="449.4">做波段</tspan><tspan x="783.7" y="448.6" font-size="12" letter-spacing="0">&gt;75</tspan><tspan x="803.8" y="449.4">强仓</tspan></text>
<text font-size="12.5" letter-spacing="-0.5" fill="#ffff00" shape-rendering="geometricPrecision"><tspan x="699.7" y="458.4">风险</tspan><tspan x="724" y="457.6" font-size="12" letter-spacing="0">&lt;50</tspan><tspan x="744.1" y="458.4">买入</tspan><tspan x="771.7" y="457.6" font-size="12" letter-spacing="0">&gt;150</tspan><tspan x="798.5" y="458.4">卖出</tspan><tspan x="822.7" y="457.6" font-size="12" letter-spacing="0">(</tspan><tspan x="826.4" y="458.4">起飞除外</tspan><tspan x="874.7" y="457.6" font-size="12" letter-spacing="0">)</tspan></text>
<polyline points="4.5,476.6 12.5,476.6 20.5,490.0 28.5,502.4 36.5,506.0 45.5,509.0 53.5,512.0 61.5,515.0 69.5,518.0 77.5,520.4 86.5,521.6 94.5,522.4 102.5,526.0 110.5,528.4 118.5,527.0 127.5,522.4 135.5,518.4 143.5,516.4 151.5,516.4 159.5,517.6 168.5,519.0 176.5,516.0 184.5,515.6 192.5,515.4 201.5,514.0 209.5,514.0 217.5,519.4 225.5,520.0 233.5,520.0 242.5,519.6 250.5,514.0 258.5,510.0 266.5,509.4 274.5,507.0 283.5,502.4 291.5,499.6 299.5,499.4 307.5,501.0 315.5,505.0 324.5,506.0 332.5,508.4 340.5,507.0 348.5,507.6 356.5,509.6 365.5,511.0 373.5,511.6 381.5,512.4 389.5,513.0 397.5,513.6 406.5,514.6 414.5,514.6 422.5,513.0 430.5,507.0 439.5,503.6 447.5,500.5 455.5,496.4 463.5,496.0 471.5,495.6 480.5,492.6 488.5,492.6 496.5,492.0 504.5,489.0 512.5,487.0 521.5,486.6 529.5,485.6 537.5,486.0 545.5,486.6 553.5,486.6 562.5,487.4 570.5,488.6 578.5,489.0 586.5,489.0 594.5,489.0 603.5,488.6 611.5,486.0 619.5,483.0 627.5,483.0 635.5,485.6 644.5,488.0 652.5,490.6 660.5,491.0 668.5,493.0 676.5,493.0 685.5,489.4 693.5,487.0 701.5,481.4 709.5,480.4 718.5,483.6 726.5,481.0 734.5,484.4 742.5,489.0 750.5,492.4 759.5,495.0 767.5,498.4 775.5,500.4 783.5,502.4 791.5,504.0 800.5,508.0 808.5,521.0 816.5,529.0 824.5,526.0 832.5,512.0 841.5,514.0 849.5,513.0 857.5,508.0 865.5,501.0 873.5,498.0 882.5,499.4 890.5,499.4 898.5,503.0 906.5,501.0 914.5,500.6 923.5,502.0 931.5,497.0 939.5,490.0 947.5,488.6 955.5,493.0 964.5,497.0 972.5,498.6 980.5,497.0 988.5,491.0 997.5,484.6 1005.5,481.0 1013.5,479.0 1021.5,479.0 1029.5,483.0 1038.5,488.0 1046.5,493.6" fill="none" stroke="#808080" stroke-width="2" stroke-linejoin="round" shape-rendering="crispEdges" clip-path="url(#cp)"/>
<polyline points="4.5,537.6 12.5,537.6 20.5,524.0 28.5,512.4 36.5,509.6 45.5,507.4 53.5,505.6 61.5,502.4 69.5,497.0 77.5,494.0 86.5,492.4 94.5,492.0 102.5,488.4 110.5,485.6 118.5,489.0 127.5,491.0 135.5,496.6 143.5,498.6 151.5,498.6 159.5,498.4 168.5,496.0 176.5,498.0 184.5,498.6 192.5,498.6 201.5,500.4 209.5,500.4 217.5,496.0 225.5,495.4 233.5,495.4 242.5,495.4 250.5,502.0 258.5,503.6 266.5,504.0 274.5,507.0 283.5,512.0 291.5,515.4 299.5,516.0 307.5,514.4 315.5,510.0 324.5,509.4 332.5,507.4 340.5,506.4 348.5,505.6 356.5,504.0 365.5,502.6 373.5,502.4 381.5,502.0 389.5,501.0 397.5,500.6 406.5,500.0 414.5,499.6 422.5,502.0 430.5,507.6 439.5,509.4 447.5,513.3 455.5,519.0 463.5,519.0 471.5,518.6 480.5,521.6 488.5,522.0 496.5,522.4 504.5,525.4 512.5,527.6 521.5,528.4 529.5,529.0 537.5,529.0 545.5,529.0 553.5,528.4 562.5,527.6 570.5,526.0 578.5,525.6 586.5,525.6 594.5,525.6 603.5,525.6 611.5,528.0 619.5,531.0 627.5,531.4 635.5,529.4 644.5,528.0 652.5,523.6 660.5,523.0 668.5,521.0 676.5,520.0 685.5,524.0 693.5,528.0 701.5,533.0 709.5,533.6 718.5,530.0 726.5,534.0 734.5,530.0 742.5,527.0 750.5,524.0 759.5,521.0 767.5,516.0 775.5,514.0 783.5,511.0 791.5,509.4 800.5,508.0 808.5,496.0 816.5,486.0 824.5,489.4 832.5,502.0 841.5,500.6 849.5,502.0 857.5,507.0 865.5,513.0 873.5,516.0 882.5,515.6 890.5,515.6 898.5,512.4 906.5,513.4 914.5,513.0 923.5,513.0 931.5,518.0 939.5,525.0 947.5,527.0 955.5,522.4 964.5,518.4 972.5,516.0 980.5,518.0 988.5,524.0 997.5,529.6 1005.5,533.0 1013.5,536.0 1021.5,536.0 1029.5,532.0 1038.5,528.0 1046.5,521.0" fill="none" stroke="#0000ff" stroke-width="2" stroke-linejoin="round" shape-rendering="crispEdges" clip-path="url(#cp)"/>
<polyline points="4.5,567.4 12.5,567.0 20.5,555.0 28.5,544.0 36.5,540.0 45.5,538.0 53.5,537.0 61.5,535.4 69.5,530.4 77.5,527.4 86.5,526.0 94.5,525.6 102.5,524.0 110.5,521.6 118.5,525.0 127.5,527.4 135.5,533.6 143.5,536.0 151.5,536.0 159.5,536.0 168.5,535.0 176.5,537.6 184.5,539.0 192.5,538.6 201.5,540.6 209.5,540.6 217.5,536.0 225.5,536.2 233.5,537.0 242.5,537.0 250.5,544.6 258.5,546.0 266.5,546.0 274.5,550.0 283.5,554.6 291.5,557.0 299.5,557.0 307.5,555.0 315.5,552.0 324.5,551.0 332.5,550.4 340.5,548.0 348.5,547.0 356.5,546.0 365.5,545.6 373.5,545.6 381.5,545.6 389.5,545.0 397.5,545.0 406.5,544.0 414.5,544.0 422.5,546.0 430.5,552.0 439.5,554.0 447.5,557.0 455.5,562.0 463.5,561.4 471.5,561.4 480.5,564.6 488.5,564.6 496.5,565.6 504.5,567.6 512.5,568.0 521.5,568.6 529.5,569.0 537.5,569.0 545.5,568.4 553.5,567.6 562.5,567.0 570.5,565.6 578.5,565.0 586.5,564.4 594.5,563.0 603.5,563.0 611.5,566.4 619.5,568.0 627.5,568.0 635.5,566.4 644.5,564.0 652.5,560.0 660.5,559.0 668.5,557.0 676.5,556.4 685.5,560.0 693.5,563.0 701.5,567.6 709.5,568.6 718.5,566.0 726.5,567.4 734.5,564.4 742.5,559.0 750.5,557.0 759.5,555.0 767.5,550.4 775.5,549.4 783.5,547.0 791.5,545.6 800.5,543.6 808.5,534.0 816.5,523.0 824.5,527.0 832.5,539.0 841.5,537.6 849.5,539.6 857.5,545.0 865.5,551.0 873.5,554.0 882.5,553.8 890.5,552.4 898.5,550.4 906.5,552.0 914.5,552.0 923.5,551.4 931.5,556.0 939.5,562.0 947.5,563.6 955.5,558.0 964.5,555.6 972.5,553.0 980.5,556.0 988.5,562.0 997.5,567.0 1005.5,569.4 1013.5,571.0 1021.5,570.6 1029.5,566.0 1038.5,561.6 1046.5,556.0" fill="none" stroke="#00ff00" stroke-width="2" stroke-linejoin="round" shape-rendering="crispEdges" clip-path="url(#cp)"/>
<polyline points="4.5,486.6 12.5,487.4 20.5,487.6 28.5,485.0 36.5,483.6 45.5,479.0 53.5,474.4 61.5,469.0 69.5,463.0 77.5,455.6 86.5,451.0 94.5,445.0 102.5,439.6 110.5,433.6 118.5,430.0 127.5,427.4 135.5,427.0 143.5,427.4 151.5,429.6 159.5,429.6 168.5,428.6 176.5,430.0 184.5,432.4 192.5,435.6 201.5,439.0 209.5,441.6 217.5,440.4 225.5,440.0 233.5,440.0 242.5,440.0 250.5,443.0 258.5,448.0 266.5,451.0 274.5,456.4 283.5,462.4 291.5,468.0 299.5,472.4 307.5,475.0 315.5,476.4 324.5,476.6 332.5,476.6 340.5,475.4 348.5,473.0 356.5,470.0 365.5,465.6 373.5,461.6 381.5,456.0 389.5,450.0 397.5,444.0 406.5,440.0 414.5,433.6 422.5,432.6 430.5,434.4 439.5,437.0 447.5,441.0 455.5,446.0 463.5,452.0 471.5,456.0 480.5,462.4 488.5,467.4 496.5,472.4 504.5,479.0 512.5,485.6 521.5,487.6 529.5,492.4 537.5,496.4 545.5,499.4 553.5,500.6 562.5,500.6 570.5,500.4 578.5,498.0 586.5,496.0 594.5,494.0 603.5,491.4 611.5,491.4 619.5,494.4 627.5,495.0 635.5,495.0 644.5,494.4 652.5,490.6 660.5,487.4 668.5,485.0 676.5,480.0 685.5,479.4 693.5,479.4 701.5,482.0 709.5,482.4 718.5,483.4 726.5,485.0 734.5,485.0 742.5,483.6 750.5,480.0 759.5,476.4 767.5,472.0 775.5,466.6 783.5,460.0 791.5,454.0 800.5,449.0 808.5,445.0 816.5,443.0 824.5,441.6 832.5,440.4 841.5,440.4 849.5,442.0 857.5,444.4 865.5,448.0 873.5,452.4 882.5,456.4 890.5,461.6 898.5,464.0 906.5,469.0 914.5,473.0 923.5,475.0 931.5,479.0 939.5,484.0 947.5,486.4 955.5,486.6 964.5,486.6 972.5,485.6 980.5,486.0 988.5,487.0 997.5,490.4 1005.5,494.0 1013.5,498.0 1021.5,500.0 1029.5,500.0 1038.5,497.6 1046.5,494.0" fill="none" stroke="#ffff00" stroke-width="2" stroke-linejoin="round" shape-rendering="crispEdges" clip-path="url(#cp)"/>
<polyline points="4.5,571.0 12.5,562.0 20.5,561.4 28.5,515.0 36.5,534.6 45.5,499.0 53.5,513.5 61.5,489.5 69.5,497.8 77.5,489.0 86.5,497.6 94.5,497.6 102.5,497.6 110.5,497.6 118.5,515.5 127.5,525.0 135.5,552.3 143.5,552.3 151.5,571.0 159.5,561.4 168.5,536.0 176.5,571.0 184.5,579.4 192.5,579.4 201.5,589.0 209.5,579.4 217.5,536.0 225.5,552.0 233.5,552.0 242.5,552.0 250.5,589.0 258.5,597.4 266.5,580.4 274.5,608.0 283.5,626.0 291.5,609.0 299.5,598.4 307.5,571.4 315.5,562.0 324.5,562.0 332.5,552.0 340.5,535.0 348.5,534.6 356.5,516.0 365.5,510.5 373.5,507.4 381.5,498.0 389.5,489.4 397.5,498.0 406.5,506.4 414.5,498.6 422.5,535.0 430.5,579.4 439.5,579.4 447.5,589.0 455.5,617.0 463.5,597.6 471.5,597.6 480.5,617.0 488.5,597.6 496.5,597.6 504.5,617.0 512.5,608.0 521.5,589.4 529.5,597.6 537.5,597.6 545.5,580.0 553.5,571.0 562.5,555.0 570.5,544.0 578.5,535.0 586.5,534.4 594.5,525.0 603.5,525.0 611.5,553.0 619.5,580.0 627.5,571.4 635.5,553.0 644.5,544.0 652.5,508.0 660.5,525.0 668.5,517.0 676.5,508.0 685.5,552.0 693.5,552.4 701.5,580.0 709.5,562.4 718.5,554.0 726.5,580.0 734.5,544.4 742.5,535.0 750.5,525.0 759.5,516.0 767.5,507.4 775.5,506.0 783.5,490.0 791.5,498.0 800.5,489.4 808.5,498.0 816.5,490.0 824.5,554.0 832.5,580.0 841.5,554.4 849.5,571.4 857.5,589.0 865.5,589.0 873.5,597.6 882.5,589.0 890.5,597.6 898.5,580.0 906.5,597.6 914.5,589.0 923.5,579.6 931.5,589.0 939.5,597.6 947.5,589.0 955.5,554.0 964.5,544.0 972.5,544.0 980.5,562.0 988.5,562.0 997.5,589.0 1005.5,580.0 1013.5,597.6 1021.5,571.4 1029.5,554.0 1038.5,527.0 1046.5,508.0" fill="none" stroke="#ff00ff" stroke-width="2" stroke-linejoin="round" shape-rendering="crispEdges" clip-path="url(#cp)"/>
<polygon points="33.30,508.30 34.46,511.00 37.39,511.27 35.18,513.21 35.83,516.08 33.30,514.58 30.77,516.08 31.42,513.21 29.21,511.27 32.14,511.00" fill="#00ff00" shape-rendering="geometricPrecision"/>
<text x="37.5" y="516.8" font-size="12.5" letter-spacing="-0.5" fill="#00ff00" shape-rendering="geometricPrecision">最佳买点</text>
<path d="M29 514 L34 519.7 L30 519.7 L30 526 L28 526 L28 519.7 L24 519.7 Z" fill="#ff0000" shape-rendering="geometricPrecision"/>
<polygon points="320.30,505.90 321.46,508.60 324.39,508.87 322.18,510.81 322.83,513.68 320.30,512.18 317.77,513.68 318.42,510.81 316.21,508.87 319.14,508.60" fill="#00ff00" shape-rendering="geometricPrecision"/>
<text x="324.5" y="514.4" font-size="12.5" letter-spacing="-0.5" fill="#00ff00" shape-rendering="geometricPrecision">最佳买点</text>
<path d="M316 512 L321 517.7 L317 517.7 L317 524 L315 524 L315 517.7 L311 517.7 Z" fill="#ff0000" shape-rendering="geometricPrecision"/>
<polygon points="772.30,511.90 773.46,514.60 776.39,514.87 774.18,516.81 774.83,519.68 772.30,518.18 769.77,519.68 770.42,516.81 768.21,514.87 771.14,514.60" fill="#00ff00" shape-rendering="geometricPrecision"/>
<text x="776.5" y="520.4" font-size="12.5" letter-spacing="-0.5" fill="#00ff00" shape-rendering="geometricPrecision">最佳买点</text>
<path d="M768 518 L773 523.7 L769 523.7 L769 530 L767 530 L767 523.7 L763 523.7 Z" fill="#ff0000" shape-rendering="geometricPrecision"/>
<polygon points="903.30,508.30 904.46,511.00 907.39,511.27 905.18,513.21 905.83,516.08 903.30,514.58 900.77,516.08 901.42,513.21 899.21,511.27 902.14,511.00" fill="#00ff00" shape-rendering="geometricPrecision"/>
<text x="907.5" y="516.8" font-size="12.5" letter-spacing="-0.5" fill="#00ff00" shape-rendering="geometricPrecision">最佳买点</text>
<path d="M899 514 L904 519.7 L900 519.7 L900 526 L898 526 L898 519.7 L894 519.7 Z" fill="#ff0000" shape-rendering="geometricPrecision"/>
<polygon points="928.30,508.90 929.46,511.60 932.39,511.87 930.18,513.81 930.83,516.68 928.30,515.18 925.77,516.68 926.42,513.81 924.21,511.87 927.14,511.60" fill="#00ff00" shape-rendering="geometricPrecision"/>
<text x="932.5" y="517.4" font-size="12.5" letter-spacing="-0.5" fill="#00ff00" shape-rendering="geometricPrecision">最佳买点</text>
<path d="M924 515 L929 520.7 L925 520.7 L925 527 L923 527 L923 520.7 L919 520.7 Z" fill="#ff0000" shape-rendering="geometricPrecision"/>
<g clip-path="url(#cp2)">
<path d="M1048 417.5 L1058 417.5" stroke="#ff0000" stroke-width="1"/><path d="M1047 417.5 l3 -1.8 v3.6 z" fill="#ff0000" shape-rendering="geometricPrecision"/>
<text x="1057.7" y="422" font-size="12.5" letter-spacing="-0.5" fill="#ff0000" shape-rendering="geometricPrecision">强势</text>
</g>
<g clip-path="url(#cp2)">
<path d="M1048 471.5 L1058 471.5" stroke="#808080" stroke-width="1"/><path d="M1047 471.5 l3 -1.8 v3.6 z" fill="#808080" shape-rendering="geometricPrecision"/>
<text x="1057.7" y="476" font-size="12.5" letter-spacing="-0.5" fill="#808080" shape-rendering="geometricPrecision">套牢</text>
</g>
<g clip-path="url(#cp2)">
<path d="M1048 484.5 L1058 484.5" stroke="#ff0000" stroke-width="1"/><path d="M1047 484.5 l3 -1.8 v3.6 z" fill="#ff0000" shape-rendering="geometricPrecision"/>
<text x="1057.7" y="489" font-size="12.5" letter-spacing="-0.5" fill="#ff0000" shape-rendering="geometricPrecision">风险</text>
</g>
<g clip-path="url(#cp2)">
<path d="M1048 498.5 L1058 498.5" stroke="#ff00ff" stroke-width="1"/><path d="M1047 498.5 l3 -1.8 v3.6 z" fill="#ff00ff" shape-rendering="geometricPrecision"/>
<text x="1057.7" y="503" font-size="12.5" letter-spacing="-0.5" fill="#ff00ff" shape-rendering="geometricPrecision">满仓</text>
</g>
<g clip-path="url(#cp2)">
<path d="M1048 507.5 L1058 507.5" stroke="#00ff00" stroke-width="1"/><path d="M1047 507.5 l3 -1.8 v3.6 z" fill="#00ff00" shape-rendering="geometricPrecision"/>
<text x="1057.7" y="512" font-size="12.5" letter-spacing="-0.5" fill="#00ff00" shape-rendering="geometricPrecision">安全</text>
</g>
<g clip-path="url(#cp2)">
<path d="M1048 535.5 L1058 535.5" stroke="#0000ff" stroke-width="1"/><path d="M1047 535.5 l3 -1.8 v3.6 z" fill="#0000ff" shape-rendering="geometricPrecision"/>
<text x="1057.7" y="540" font-size="12.5" letter-spacing="-0.5" fill="#0000ff" shape-rendering="geometricPrecision">波段</text>
</g>
<g clip-path="url(#cp2)">
<path d="M1048 598.5 L1058 598.5" stroke="#00c8c8" stroke-width="1"/><path d="M1047 598.5 l3 -1.8 v3.6 z" fill="#00c8c8" shape-rendering="geometricPrecision"/>
<text x="1057.7" y="603" font-size="12.5" letter-spacing="-0.5" fill="#00c8c8" shape-rendering="geometricPrecision">空仓</text>
</g>
<line x1="1" y1="462.5" x2="1075" y2="462.5" stroke="#b80000" stroke-width="1" stroke-dasharray="1 3"/>
<rect x="1" y="416" width="1074" height="1" fill="#ffff00"/>
<rect x="1" y="471" width="1074" height="1" fill="#808080"/>
<rect x="1" y="484" width="1074" height="1" fill="#0000ff"/>
<rect x="1" y="498" width="1074" height="1" fill="#ff00ff"/>
<rect x="1" y="507" width="1074" height="1" fill="#ffff00"/>
<rect x="1" y="535" width="1074" height="1" fill="#0000ff"/>
<rect x="1" y="553" width="1074" height="1" fill="#ffffff"/>
<rect x="1" y="598" width="1074" height="1" fill="#ff00ff"/>
<rect x="1075" y="396" width="2" height="234" fill="#c00000"/>
<rect x="1125" y="396" width="2" height="234" fill="#c00000"/>
<rect x="1075" y="396" width="52" height="2" fill="#c00000"/>
<rect x="1077" y="416" width="4" height="1" fill="#c00000"/>
<rect x="1077" y="462" width="4" height="1" fill="#c00000"/>
<rect x="1077" y="507" width="4" height="1" fill="#c00000"/>
<rect x="1077" y="553" width="4" height="1" fill="#c00000"/>
<rect x="1077" y="439" width="1" height="1" fill="#c00000"/>
<rect x="1077" y="485" width="1" height="1" fill="#c00000"/>
<rect x="1077" y="530" width="1" height="1" fill="#c00000"/>
<rect x="1077" y="576" width="1" height="1" fill="#c00000"/>
<text x="1090.6" y="420.9" font-size="12" fill="#ff3232" shape-rendering="geometricPrecision">150.0</text>
<text x="1090.6" y="466.9" font-size="12" fill="#ff3232" shape-rendering="geometricPrecision">100.0</text>
<text x="1090.6" y="511.9" font-size="12" fill="#ff3232" shape-rendering="geometricPrecision">50.00</text>
<text x="1097.3" y="557.9" font-size="12" fill="#ff3232" shape-rendering="geometricPrecision">0.00</text>
<rect x="0" y="630" width="1127" height="1" fill="#c00000"/>
<rect x="0" y="646" width="1127" height="1" fill="#c00000"/>
<rect x="183" y="630" width="1" height="17" fill="#c00000"/>
<text x="185.2" y="643.2" font-size="12" fill="#ff3232" shape-rendering="geometricPrecision">6</text>
<rect x="347" y="630" width="1" height="17" fill="#c00000"/>
<text x="349.2" y="643.2" font-size="12" fill="#ff3232" shape-rendering="geometricPrecision">7</text>
<rect x="536" y="630" width="1" height="17" fill="#c00000"/>
<text x="538.2" y="643.2" font-size="12" fill="#ff3232" shape-rendering="geometricPrecision">8</text>
<rect x="708" y="630" width="1" height="17" fill="#c00000"/>
<rect x="889" y="630" width="1" height="17" fill="#c00000"/>
<text x="891.2" y="643.2" font-size="12" fill="#ff3232" shape-rendering="geometricPrecision">10</text>
<rect x="66" y="631" width="1" height="2" fill="#c00000"/>
<rect x="105" y="631" width="1" height="2" fill="#c00000"/>
<rect x="144" y="631" width="1" height="2" fill="#c00000"/>
<rect x="224" y="631" width="1" height="2" fill="#c00000"/>
<rect x="265" y="631" width="1" height="2" fill="#c00000"/>
<rect x="306" y="631" width="1" height="2" fill="#c00000"/>
<rect x="394" y="631" width="1" height="2" fill="#c00000"/>
<rect x="442" y="631" width="1" height="2" fill="#c00000"/>
<rect x="489" y="631" width="1" height="2" fill="#c00000"/>
<rect x="579" y="631" width="1" height="2" fill="#c00000"/>
<rect x="622" y="631" width="1" height="2" fill="#c00000"/>
<rect x="665" y="631" width="1" height="2" fill="#c00000"/>
<rect x="799" y="631" width="1" height="2" fill="#c00000"/>
<rect x="844" y="631" width="1" height="2" fill="#c00000"/>
<rect x="924" y="631" width="1" height="2" fill="#c00000"/>
<rect x="959" y="631" width="1" height="2" fill="#c00000"/>
<text fill="#ff3232" shape-rendering="geometricPrecision"><tspan x="4" y="643.2" font-size="12">2025</tspan><tspan x="30.4" y="644.2" font-size="12.5">年</tspan></text>
<rect x="707" y="631" width="78" height="15" fill="#000080"/>
<rect x="706" y="630" width="1" height="17" fill="#c00000"/>
<rect x="784" y="630" width="1" height="17" fill="#c00000"/>
<text fill="#c0c0c0" shape-rendering="geometricPrecision"><tspan x="708" y="642.6" font-size="12">2025/09/01/</tspan><tspan x="771.2" y="644.2" font-size="12.5">一</tspan></text>
<rect x="42" y="647" width="1" height="3" fill="#c00000"/>
<rect x="73" y="647" width="1" height="3" fill="#c00000"/>
<rect x="115" y="647" width="1" height="3" fill="#c00000"/>
<rect x="144" y="647" width="1" height="3" fill="#c00000"/>
<rect x="177" y="647" width="1" height="3" fill="#c00000"/>
<rect x="207" y="647" width="1" height="3" fill="#c00000"/>
<rect x="241" y="647" width="1" height="3" fill="#c00000"/>
<rect x="282" y="647" width="1" height="3" fill="#c00000"/>
<rect x="308" y="647" width="1" height="3" fill="#c00000"/>
<rect x="332" y="647" width="1" height="3" fill="#c00000"/>
<rect x="364" y="647" width="1" height="3" fill="#c00000"/>
<rect x="390" y="647" width="1" height="3" fill="#c00000"/>
<rect x="422" y="647" width="1" height="3" fill="#c00000"/>
<rect x="480" y="647" width="1" height="3" fill="#c00000"/>
<rect x="508" y="647" width="1" height="3" fill="#c00000"/>
<rect x="536" y="647" width="1" height="3" fill="#c00000"/>
<rect x="568" y="647" width="1" height="3" fill="#c00000"/>
<rect x="599" y="647" width="1" height="3" fill="#c00000"/>
<rect x="628" y="647" width="1" height="3" fill="#c00000"/>
<rect x="663" y="647" width="1" height="3" fill="#c00000"/>
<rect x="696" y="647" width="1" height="3" fill="#c00000"/>
<rect x="735" y="647" width="1" height="3" fill="#c00000"/>
<rect x="766" y="647" width="1" height="3" fill="#c00000"/>
<rect x="807" y="647" width="1" height="3" fill="#c00000"/>
<rect x="839" y="647" width="1" height="3" fill="#c00000"/>
<rect x="871" y="647" width="1" height="3" fill="#c00000"/>
<rect x="0" y="646" width="1" height="4" fill="#c00000"/>
<rect x="7.4" y="648.6" width="1.1" height="1.4" fill="#c0c0c0"/>
<rect x="10" y="648.6" width="1.1" height="1.4" fill="#c0c0c0"/>
<rect x="12.7" y="648.6" width="1.6" height="1.4" fill="#c0c0c0"/>
<rect x="17" y="648.6" width="1.6" height="1.4" fill="#c0c0c0"/>
<rect x="20.7" y="648.6" width="1.1" height="1.4" fill="#c0c0c0"/>
<rect x="51.2" y="648.6" width="0.8" height="1.4" fill="#c0c0c0"/>
<rect x="846" y="649.2" width="5" height="0.8" fill="#54ffff"/>
<rect x="856" y="649.2" width="9" height="0.8" fill="#54ffff"/>
<rect x="829" y="648.6" width="1" height="1.4" fill="#909090"/>
<rect x="1127" y="25" width="3" height="1" fill="#c00000"/>
<rect x="1127" y="45" width="3" height="1" fill="#c00000"/>
<rect x="1127" y="142" width="3" height="1" fill="#c00000"/>
<rect x="1127" y="239" width="3" height="1" fill="#c00000"/>
<rect x="1127" y="331" width="3" height="1" fill="#c00000"/>
<rect x="1127" y="418" width="3" height="1" fill="#c00000"/>
<rect x="1127" y="437" width="3" height="1" fill="#c00000"/>
<rect x="1128.6" y="31" width="1.4" height="1" fill="#b0b0b0"/>
<rect x="1128.6" y="35" width="1.4" height="1" fill="#b0b0b0"/>
<rect x="1128.6" y="37" width="1.4" height="1" fill="#b0b0b0"/>
<rect x="1128.6" y="59" width="1.4" height="1" fill="#b0b0b0"/>
<rect x="1128.6" y="78" width="1.4" height="1" fill="#b0b0b0"/>
<rect x="1128.6" y="97" width="1.4" height="1" fill="#b0b0b0"/>
<rect x="1128.6" y="116" width="1.4" height="1" fill="#b0b0b0"/>
<rect x="1128.6" y="135" width="1.4" height="1" fill="#b0b0b0"/>
<rect x="1128.6" y="154" width="1.4" height="1" fill="#b0b0b0"/>
<rect x="1128.6" y="159" width="1.4" height="1" fill="#b0b0b0"/>
<rect x="1128.6" y="173" width="1.4" height="1" fill="#b0b0b0"/>
<rect x="1128.6" y="179" width="1.4" height="1" fill="#b0b0b0"/>
<rect x="1128.6" y="193" width="1.4" height="1" fill="#b0b0b0"/>
<rect x="1128.6" y="198" width="1.4" height="1" fill="#b0b0b0"/>
<rect x="1128.6" y="211" width="1.4" height="1" fill="#b0b0b0"/>
<rect x="1128.6" y="222" width="1.4" height="1" fill="#b0b0b0"/>
<rect x="1128.6" y="230" width="1.4" height="1" fill="#b0b0b0"/>
<rect x="1128.6" y="242" width="1.4" height="1" fill="#b0b0b0"/>
<rect x="1128.6" y="255" width="1.4" height="1" fill="#b0b0b0"/>
<rect x="1128.6" y="266" width="1.4" height="1" fill="#b0b0b0"/>
<rect x="1128.6" y="271" width="1.4" height="1" fill="#b0b0b0"/>
<rect x="1128.6" y="284" width="1.4" height="1" fill="#b0b0b0"/>
<rect x="1128.6" y="289" width="1.4" height="1" fill="#b0b0b0"/>
<rect x="1128.6" y="302" width="1.4" height="1" fill="#b0b0b0"/>
<rect x="1128.6" y="313" width="1.4" height="1" fill="#b0b0b0"/>
<rect x="1128.6" y="321" width="1.4" height="1" fill="#b0b0b0"/>
<rect x="1128.6" y="334" width="1.4" height="1" fill="#b0b0b0"/>
<rect x="1128.6" y="340" width="1.4" height="1" fill="#b0b0b0"/>
<rect x="1128.6" y="347" width="1.4" height="1" fill="#b0b0b0"/>
<rect x="1128.6" y="358" width="1.4" height="1" fill="#b0b0b0"/>
<rect x="1128.6" y="368" width="1.4" height="1" fill="#b0b0b0"/>
<rect x="1128.6" y="423" width="1.4" height="1" fill="#b0b0b0"/>
<rect x="1128.6" y="425" width="1.4" height="1" fill="#b0b0b0"/>
<rect x="1128.6" y="429" width="1.4" height="1" fill="#b0b0b0"/>
<rect x="1128.6" y="435" width="1.4" height="1" fill="#b0b0b0"/>
<rect x="1128.6" y="443" width="1.4" height="1" fill="#b0b0b0"/>
<rect x="1128.6" y="460" width="1.4" height="1" fill="#b0b0b0"/>
<rect x="1128.6" y="479" width="1.4" height="1" fill="#b0b0b0"/>
<rect x="1128.6" y="497" width="1.4" height="1" fill="#b0b0b0"/>
<rect x="1128.6" y="516" width="1.4" height="1" fill="#b0b0b0"/>
<rect x="1128.6" y="534" width="1.4" height="1" fill="#b0b0b0"/>
<rect x="1128.6" y="551" width="1.4" height="1" fill="#b0b0b0"/>
<rect x="1128.6" y="569" width="1.4" height="1" fill="#b0b0b0"/>
<rect x="1128.6" y="588" width="1.4" height="1" fill="#b0b0b0"/>
<rect x="984" y="600" width="146" height="50" fill="#000000"/>
<text x="1017.3" y="621.4" font-size="18.3" font-weight="bold" letter-spacing="-0.4" fill="#f4f0f0" shape-rendering="geometricPrecision">股朋指标网</text>
<text x="991" y="638.4" font-size="15.6" font-weight="bold" fill="#f0ecec" shape-rendering="geometricPrecision">www.7gpzb.com</text>
</svg>
</body></html>
